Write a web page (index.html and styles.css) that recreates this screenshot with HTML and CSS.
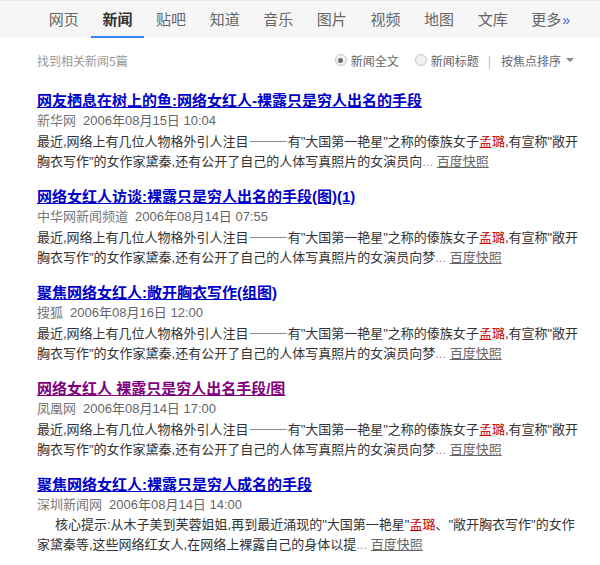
FILE: index.html
```html
<!DOCTYPE html>
<html lang="zh-CN">
<head>
<meta charset="utf-8">
<title>百度新闻</title>
<link rel="stylesheet" href="styles.css">
</head>
<body>
<div class="topbar">
  <nav class="tabs">
    <a class="tab">网页</a>
    <a class="tab active">新闻</a>
    <a class="tab">贴吧</a>
    <a class="tab">知道</a>
    <a class="tab">音乐</a>
    <a class="tab">图片</a>
    <a class="tab">视频</a>
    <a class="tab">地图</a>
    <a class="tab">文库</a>
    <a class="tab">更多<span class="raquo">»</span></a>
  </nav>
</div>
<div class="content">
  <div class="filter">
    <span class="count">找到相关新闻5篇</span>
    <div class="options">
      <span class="radio on"></span><span class="opt">新闻全文</span>
      <span class="radio"></span><span class="opt">新闻标题</span>
      <span class="sep">|</span>
      <span class="opt">按焦点排序</span><span class="caret"></span>
    </div>
  </div>

  <div class="result">
    <a class="title">网友栖息在树上的鱼:网络女红人-裸露只是穷人出名的手段</a>
    <div class="meta"><span class="src">新华网</span><span class="date">2006年08月15日 10:04</span></div>
    <p class="abs">最近,网络上有几位人物格外引人注目<span class="dash">———</span>有"大国第一艳星"之称的傣族女子<em>孟璐</em>,有宣称"敞开<br>胸衣写作"的女作家黛秦,还有公开了自己的人体写真照片的女演员向<span class="dots">...</span> <a class="cache">百度快照</a></p>
  </div>

  <div class="result">
    <a class="title">网络女红人访谈:裸露只是穷人出名的手段(图)(1)</a>
    <div class="meta"><span class="src">中华网新闻频道</span><span class="date">2006年08月14日 07:55</span></div>
    <p class="abs">最近,网络上有几位人物格外引人注目<span class="dash">———</span>有"大国第一艳星"之称的傣族女子<em>孟璐</em>,有宣称"敞开<br>胸衣写作"的女作家黛秦,还有公开了自己的人体写真照片的女演员向梦<span class="dots">...</span> <a class="cache">百度快照</a></p>
  </div>

  <div class="result">
    <a class="title">聚焦网络女红人:敞开胸衣写作(组图)</a>
    <div class="meta"><span class="src">搜狐</span><span class="date">2006年08月16日 12:00</span></div>
    <p class="abs">最近,网络上有几位人物格外引人注目<span class="dash">———</span>有"大国第一艳星"之称的傣族女子<em>孟璐</em>,有宣称"敞开<br>胸衣写作"的女作家黛秦,还有公开了自己的人体写真照片的女演员向梦<span class="dots">...</span> <a class="cache">百度快照</a></p>
  </div>

  <div class="result">
    <a class="title visited">网络女红人 裸露只是穷人出名手段/图</a>
    <div class="meta"><span class="src">凤凰网</span><span class="date">2006年08月14日 17:00</span></div>
    <p class="abs">最近,网络上有几位人物格外引人注目<span class="dash">———</span>有"大国第一艳星"之称的傣族女子<em>孟璐</em>,有宣称"敞开<br>胸衣写作"的女作家黛秦,还有公开了自己的人体写真照片的女演员向梦<span class="dots">...</span> <a class="cache">百度快照</a></p>
  </div>

  <div class="result">
    <a class="title">聚焦网络女红人:裸露只是穷人成名的手段</a>
    <div class="meta"><span class="src">深圳新闻网</span><span class="date">2006年08月14日 14:00</span></div>
    <p class="abs"><span class="indent"></span>核心提示:从木子美到芙蓉姐姐,再到最近涌现的"大国第一艳星"<em>孟璐</em>、"敞开胸衣写作"的女作<br>家黛秦等,这些网络红女人,在网络上裸露自己的身体以提<span class="dots">...</span> <a class="cache">百度快照</a></p>
  </div>
</div>
</body>
</html>
```

FILE: styles.css
```css
* { box-sizing: border-box; }
body {
  margin: 0;
  background: #fff;
  font-family: "Liberation Sans", "Noto Sans CJK SC", sans-serif;
  color: #333;
}
.topbar {
  height: 38px;
  background: #f6f6f6;
  border-top: 1px solid #e8e8e8;
}
.tabs {
  display: flex;
  height: 37px;
  padding-left: 37px;
}
.tab {
  display: block;
  height: 37px;
  padding: 0 11.8px;
  font-family: "Noto Sans CJK SC", sans-serif;
  font-size: 15px;
  line-height: 36px;
  color: #666;
  border-bottom: 2px solid transparent;
}
.tab.active {
  color: #333;
  font-weight: bold;
  border-bottom-color: #3385ff;
}
.raquo {
  color: #3b5bdb;
  font-family: "Liberation Sans", sans-serif;
  font-size: 14px;
  margin-left: 1px;
}
.content {
  padding-left: 37px;
  width: 582px;
}
.filter {
  display: flex;
  justify-content: space-between;
  align-items: center;
  height: 20px;
  margin-top: 12px;
  margin-bottom: 21px;
  font-family: "Noto Sans CJK SC", sans-serif;
  font-size: 12px;
}
.count { color: #999; }
.options {
  display: flex;
  align-items: center;
  color: #666;
  margin-right: 8px;
}
.radio {
  width: 12px;
  height: 12px;
  border: 1px solid #c4c4c4;
  border-radius: 50%;
  background: #f2f2f2;
  margin-right: 4px;
  position: relative;
}
.radio.on::after {
  content: "";
  position: absolute;
  left: 2.5px;
  top: 2.5px;
  width: 5px;
  height: 5px;
  border-radius: 50%;
  background: #6f6f6f;
}
.opt + .radio { margin-left: 16px; }
.sep {
  color: #b9a3cf;
  margin: 0 10px 0 9px;
}
.caret {
  width: 0;
  height: 0;
  border-left: 4px solid transparent;
  border-right: 4px solid transparent;
  border-top: 4px solid #888;
  margin-left: 5px;
}
.result {
  margin-bottom: 15px;
}
.title {
  display: block;
  font-size: 15px;
  line-height: 20px;
  font-weight: bold;
  color: #0000cc;
  text-decoration: underline;
  white-space: nowrap;
}
.title.visited { color: #800080; }
.meta {
  font-size: 13px;
  line-height: 20px;
  color: #666;
}
.src { color: #777; margin-right: 7px; }
.abs {
  margin: 0;
  width: 560px;
  font-size: 13px;
  line-height: 20px;
  color: #333;
  white-space: nowrap;
}
.dash {
  font-family: "Noto Sans CJK SC", sans-serif;
}
.indent {
  display: inline-block;
  width: 18px;
}
.abs em {
  font-style: normal;
  color: #cc0000;
}
.dots { color: #999; }
.cache {
  color: #666;
  text-decoration: underline;
}
```
